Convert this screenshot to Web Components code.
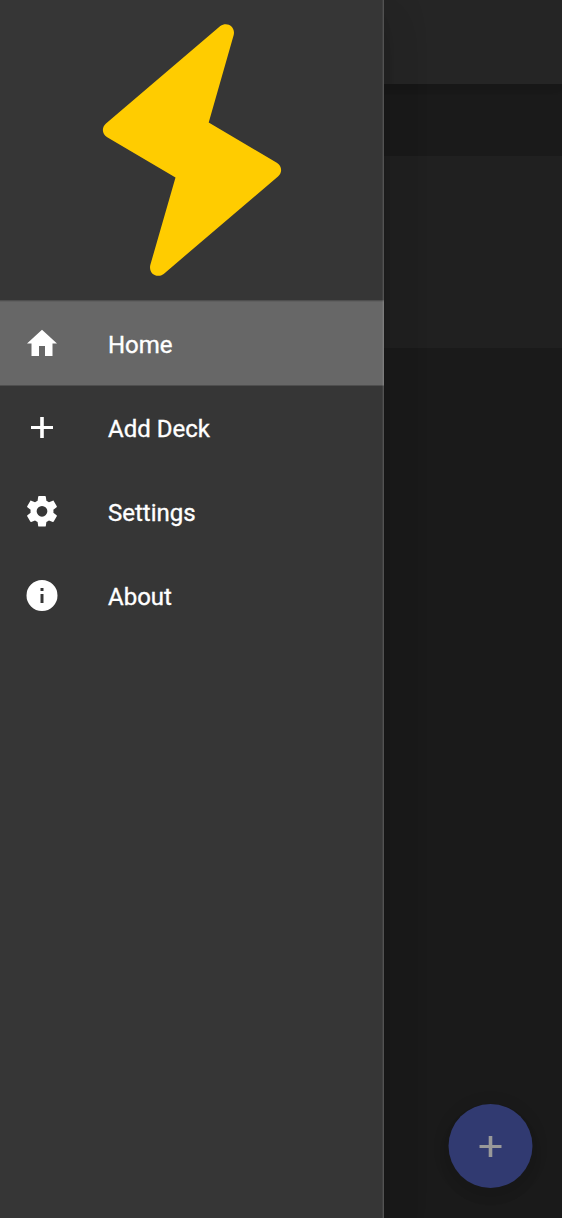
<!DOCTYPE html>
<html lang="en">
<head>
<meta charset="utf-8">
<title>Home</title>
<style>
html, body { margin: 0; height: 100%; background: #1a1a1a; overflow: hidden; font-family: Roboto, sans-serif; }
</style>
</head>
<body>
<deck-app></deck-app>
<script>
const ICONS = {
  home: 'M10,20.67V14H14V20.67H19V12.33H22L12,3.2L2,12.33H5V20.67H10Z',
  plus: 'M19.33,13.33H13.2V19.33H10.8V13.33H4.67V11.33H10.8V5.33H13.2V11.33H19.33V13.33Z',
  cog: 'M12,15.5A3.5,3.5 0 0,1 8.5,12A3.5,3.5 0 0,1 12,8.5A3.5,3.5 0 0,1 15.5,12A3.5,3.5 0 0,1 12,15.5M19.43,12.97C19.47,12.65 19.5,12.33 19.5,12C19.5,11.67 19.47,11.34 19.43,11L21.54,9.37C21.73,9.22 21.78,8.95 21.66,8.73L19.66,5.27C19.54,5.05 19.27,4.96 19.05,5.05L16.56,6.05C16.04,5.66 15.5,5.32 14.87,5.07L14.5,2.42C14.46,2.18 14.25,2 14,2H10C9.75,2 9.54,2.18 9.5,2.42L9.13,5.07C8.5,5.32 7.96,5.66 7.44,6.05L4.95,5.05C4.73,4.96 4.46,5.05 4.34,5.27L2.34,8.73C2.21,8.95 2.27,9.22 2.46,9.37L4.57,11C4.53,11.34 4.5,11.67 4.5,12C4.5,12.33 4.53,12.65 4.57,12.97L2.46,14.63C2.27,14.78 2.21,15.05 2.34,15.27L4.34,18.73C4.46,18.95 4.73,19.03 4.95,18.95L7.44,17.94C7.96,18.34 8.5,18.68 9.13,18.93L9.5,21.58C9.54,21.82 9.75,22 10,22H14C14.25,22 14.46,21.82 14.5,21.58L14.87,18.93C15.5,18.67 16.04,18.34 16.56,17.94L19.05,18.95C19.27,19.03 19.54,18.95 19.66,18.73L21.66,15.27C21.78,15.05 21.73,14.78 21.54,14.63L19.43,12.97Z',
  info: 'M13,9.33H11V7.33H13M13,17.33H11V11.33H13M12,2A10.33,10.33 0 0,0 1.67,12.33A10.33,10.33 0 0,0 12,22.67A10.33,10.33 0 0,0 22.33,12.33A10.33,10.33 0 0,0 12,2Z'
};
const NUDGE = { cog: 'transform="translate(-.24 -.04) scale(1.02)"' };
function define(name, markup) {
  customElements.define(name, class extends HTMLElement {
    connectedCallback() {
      if (this.shadowRoot) return;
      this.attachShadow({ mode: 'open' }).innerHTML = typeof markup === 'function' ? markup(this) : markup;
    }
  });
}
define('md-icon', el => `
<style>:host{display:block;width:36px;height:36px;flex:none}svg{display:block;width:100%;height:100%;fill:currentColor}</style>
<svg viewBox="0 0 24 24"><path ${NUDGE[el.getAttribute('name')] || ''} d="${ICONS[el.getAttribute('name')]}"/></svg>`);
define('bolt-logo', `
<style>:host{display:block;height:300px}svg{display:block;margin:0 auto}</style>
<svg width="300" height="300" viewBox="42 0 300 300"><path fill="#ffcc00" d="M220.3,26.1C226.500,21.200 235.700,26 233.700,35L208.700,122.500L276.800,162.700C282.200,166 282.500,172.500 278,176.500L163.700,273.900C157.500,278.800 148.300,274 150.300,265L175.500,177.500L107.200,137.300C101.800,134 101.500,127.500 106,123.500Z"/></svg>`);
define('nav-item', el => `
<style>
:host{display:flex;align-items:center;box-sizing:border-box;height:84px;padding:0 24px;gap:48px;color:#fff;font-size:24px;line-height:36px}
:host([active]){background:#676767;box-shadow:inset 0 1px #5f5f5f,0 1px #4e4e4e}
span{padding-top:4px;-webkit-text-stroke:.35px #fff}
</style>
<md-icon name="${el.getAttribute('icon')}"></md-icon><span><slot></slot></span>`);
define('nav-drawer', `
<style>
:host{display:block;box-sizing:border-box;width:384px;height:100%;background:#363636;box-shadow:0 12px 15px -7px rgba(0,0,0,.08),0 24px 36px 3px rgba(0,0,0,.08),0 9px 45px 8px rgba(0,0,0,.06)}
.edge{position:absolute;top:0;right:0;width:1px;height:100%;background:rgba(255,255,255,.14);box-shadow:-1px 0 rgba(255,255,255,.05)}
hr{margin:0;border:0;height:1px;background:#4e4e4e}
</style>
<bolt-logo></bolt-logo><hr><nav><slot></slot></nav><div class="edge"></div>`);
define('app-bar', `<style>:host{display:block;height:84px;background:#252525;box-shadow:0 3px 6px -1px rgba(0,0,0,.05),0 6px 8px rgba(0,0,0,.03),0 1px 15px rgba(0,0,0,.03);position:relative}</style>`);
define('deck-card', `<style>:host{display:block;height:192px;margin-top:72px;background:#202020}</style>`);
define('add-button', `
<style>:host{display:flex;align-items:center;justify-content:center;width:84px;height:84px;border-radius:50%;background:#313a71;color:#999;box-shadow:0 4px 8px -1px rgba(0,0,0,.05),0 9px 15px rgba(0,0,0,.04),0 2px 27px rgba(0,0,0,.04)}</style>
<md-icon name="plus"></md-icon>`);
define('deck-app', `
<style>
:host{display:block;position:relative;width:562px;height:1218px;overflow:hidden;background:#1a1a1a}
nav-drawer{position:absolute;top:0;left:0}
add-button{position:absolute;right:30px;bottom:30px;transform:translateX(.5px)}
</style>
<app-bar></app-bar><deck-card></deck-card>
<add-button></add-button>
<nav-drawer>
<nav-item icon="home" active>Home</nav-item>
<nav-item icon="plus">Add Deck</nav-item>
<nav-item icon="cog">Settings</nav-item>
<nav-item icon="info">About</nav-item>
</nav-drawer>`);
</script>
</body>
</html>
